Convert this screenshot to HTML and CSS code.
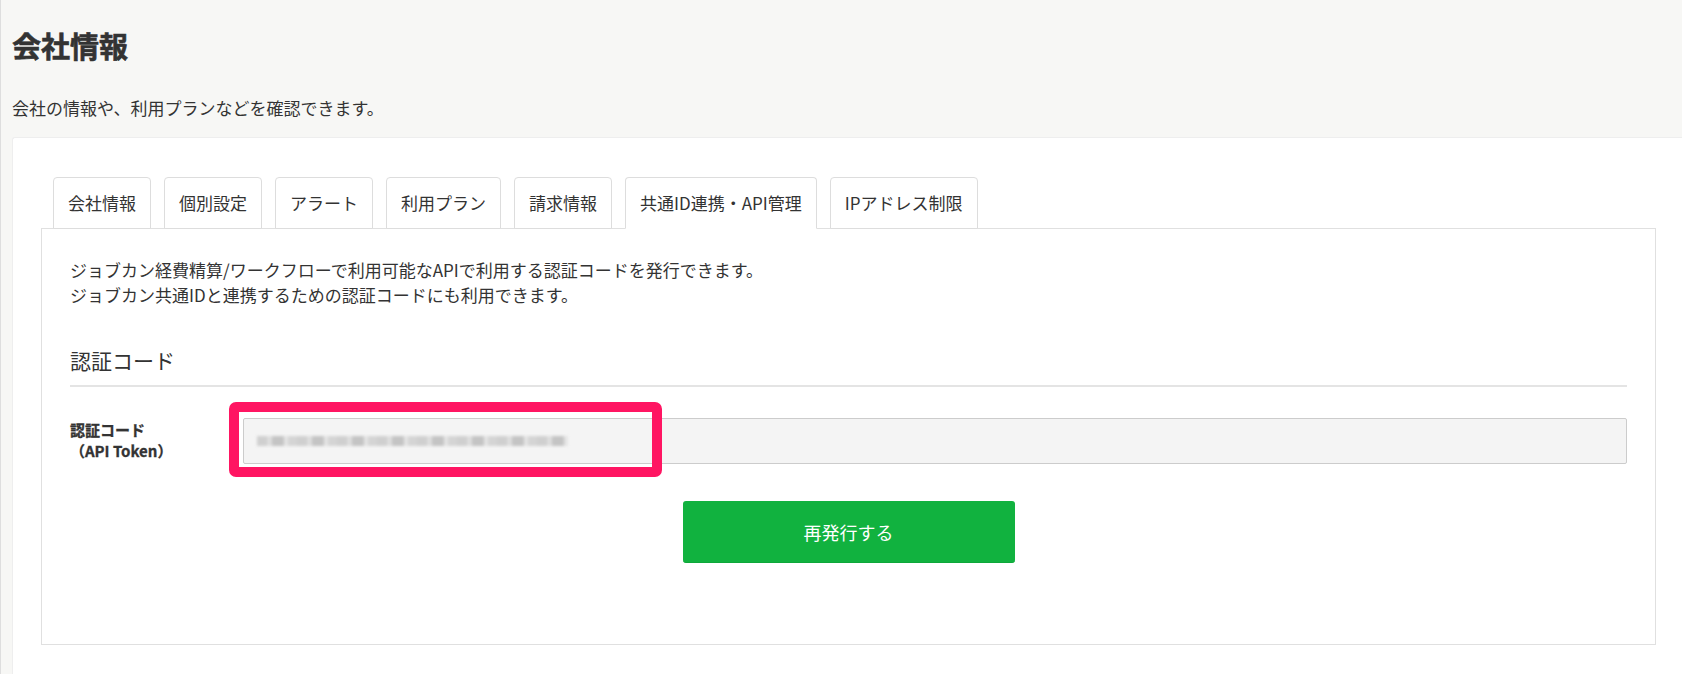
FILE: index.html
```html
<!DOCTYPE html>
<html lang="ja">
<head>
  <meta charset="UTF-8">
  <title>会社情報</title>
  <link rel="stylesheet" href="styles.css">
</head>
<body>
  <div class="page-head">
    <h1>会社情報</h1>
    <p class="lead">会社の情報や、利用プランなどを確認できます。</p>
  </div>

  <div class="card">
    <ul class="tabs">
      <li>会社情報</li>
      <li>個別設定</li>
      <li>アラート</li>
      <li>利用プラン</li>
      <li>請求情報</li>
      <li class="active">共通ID連携・API管理</li>
      <li>IPアドレス制限</li>
    </ul>

    <div class="tab-panel">
      <p class="desc">ジョブカン経費精算/ワークフローで利用可能なAPIで利用する認証コードを発行できます。<br>ジョブカン共通IDと連携するための認証コードにも利用できます。</p>

      <h3 class="section-title">認証コード</h3>

      <div class="form-row">
        <label class="form-label">認証コード<br>（API Token）</label>
        <div class="field">
          <div class="token-box"><span class="token-blur"></span></div>
          <span class="highlight"></span>
        </div>
      </div>

      <div class="actions">
        <button class="btn-reissue">再発行する</button>
      </div>
    </div>
  </div>
</body>
</html>
```

FILE: styles.css
```css
html {
  background: #f7f7f5;
}

body {
  margin: 0;
  min-height: 100vh;
  background: #f7f7f5;
  border-left: 1px solid #dedede;
  font-family: "Noto Sans CJK JP", "Noto Sans", sans-serif;
  color: #333;
}

.page-head {
  padding: 25px 11px 0;
}

h1 {
  margin: 0;
  font-size: 29px;
  line-height: 40px;
  font-weight: 700;
  -webkit-text-stroke: 0.6px #333;
}

.lead {
  margin: 30px 0 0;
  font-size: 17px;
  line-height: 25px;
}

.card {
  margin: 17px 0 0 11px;
  background: #fff;
  border: 1px solid #eee;
  border-right: 0;
  border-radius: 3px 0 0 0;
  padding: 39px 26px 60px 28px;
}

.tabs {
  display: flex;
  gap: 13px;
  list-style: none;
  margin: 0 0 -1px 12px;
  padding: 0;
}

.tabs li {
  padding: 13px 14px;
  border: 1px solid #ddd;
  border-radius: 4px 4px 0 0;
  background: #fff;
  font-size: 17px;
  line-height: 24px;
  white-space: nowrap;
}

.tabs li.active {
  border-bottom-color: #fff;
  position: relative;
  z-index: 1;
}

.tab-panel {
  border: 1px solid #e0e0e0;
  padding: 28px 28px 81px;
}

.desc {
  margin: 0;
  font-size: 17px;
  line-height: 25px;
}

.section-title {
  margin: 38px 0 0;
  padding-bottom: 10px;
  border-bottom: 2px solid #e4e4e4;
  font-size: 21px;
  line-height: 30px;
  font-weight: 400;
}

.form-row {
  display: flex;
  margin-top: 31px;
}

.form-label {
  width: 173px;
  flex-shrink: 0;
  padding-top: 1px;
  font-size: 15px;
  line-height: 21px;
  font-weight: 700;
  -webkit-text-stroke: 0.3px #333;
}

.field {
  flex: 1;
  position: relative;
}

.token-box {
  height: 44px;
  padding: 0 13px;
  border: 1px solid #ccc;
  border-radius: 2px;
  background: #f4f4f4;
  display: flex;
  align-items: center;
}

.token-blur {
  width: 311px;
  height: 10px;
  background:
    repeating-linear-gradient(90deg, #c9c9c9 0 10px, #dadada 10px 15px, #bcbcbc 15px 27px, #e2e2e2 27px 31px, #cfcfcf 31px 40px);
  filter: blur(1.5px);
  opacity: 0.85;
}

/* annotation frame drawn over the token field */
.highlight {
  position: absolute;
  left: -14px;
  top: -16px;
  width: 433px;
  height: 75px;
  box-sizing: border-box;
  border: 10px solid #ff1562;
  border-radius: 7px;
}

.actions {
  display: flex;
  justify-content: center;
  margin-top: 37px;
}

.btn-reissue {
  width: 332px;
  height: 62px;
  background: #11b23f;
  color: #fff;
  border: 0;
  border-bottom: 1px solid #0ea83a;
  border-radius: 3px;
  font-family: inherit;
  font-size: 18px;
  cursor: pointer;
}
```
